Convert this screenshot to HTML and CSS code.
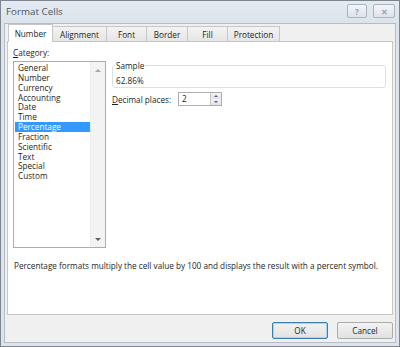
FILE: index.html
```html
<!DOCTYPE html>
<html lang="en">

<head>
    <meta charset="UTF-8">
    <title>Format Cells</title>
    <link rel="stylesheet" href="styles.css">
</head>

<body>
    <!-- Fenêtre de dialogue -->
    <div class="dialog">
        <div class="titlebar">
            <span class="title">Format Cells</span>
            <div class="title-buttons">
                <span class="tbtn help">?</span>
                <span class="tbtn close">&#x2715;</span>
            </div>
        </div>

        <div class="body">
            <!-- Onglets -->
            <div class="tabs">
                <div class="tab active">Number</div>
                <div class="tab">Alignment</div>
                <div class="tab">Font</div>
                <div class="tab">Border</div>
                <div class="tab">Fill</div>
                <div class="tab">Protection</div>
            </div>

            <div class="panel">
                <div class="columns">
                    <div class="left">
                        <div class="label"><u>C</u>ategory:</div>
                        <div class="listbox">
                            <ul class="items">
                                <li>General</li>
                                <li>Number</li>
                                <li>Currency</li>
                                <li>Accounting</li>
                                <li>Date</li>
                                <li>Time</li>
                                <li class="selected">Percentage</li>
                                <li>Fraction</li>
                                <li>Scientific</li>
                                <li>Text</li>
                                <li>Special</li>
                                <li>Custom</li>
                            </ul>
                            <div class="scrollbar">
                                <span class="arrow up"></span>
                                <span class="arrow down"></span>
                            </div>
                        </div>
                    </div>

                    <div class="right">
                        <fieldset class="sample">
                            <legend>Sample</legend>
                            <div class="sample-value">62.86%</div>
                        </fieldset>
                        <div class="decimals">
                            <span class="decimals-label"><u>D</u>ecimal places:</span>
                            <div class="spin">
                                <span class="spin-value">2</span>
                                <div class="spin-buttons">
                                    <span class="spin-btn"><span class="arrow up"></span></span>
                                    <span class="spin-btn"><span class="arrow down"></span></span>
                                </div>
                            </div>
                        </div>
                    </div>
                </div>

                <p class="description">Percentage formats multiply the cell value by 100 and displays the result with a percent symbol.</p>
            </div>

            <!-- Boutons -->
            <div class="footer">
                <button class="btn default">OK</button>
                <button class="btn">Cancel</button>
            </div>
        </div>
    </div>
</body>

</html>
```

FILE: styles.css
```css
/* Corps de la page */
body {
    margin: 0;
    font-family: "Open Sans", "Noto Sans", Arial, sans-serif;
    font-size: 8.2px;
    color: #1e1e1e;
    background-color: #fff;
}

/* Fenêtre */
.dialog {
    width: 400px;
    height: 347px;
    box-sizing: border-box;
    background-color: #dce3eb;
    border: 1px solid #7f858c;
    display: flex;
    flex-direction: column;
}

.titlebar {
    height: 22px;
    flex-shrink: 0;
    display: flex;
    justify-content: space-between;
    align-items: flex-start;
    padding: 0 4px 0 5px;
    background: linear-gradient(#e4eaf1, #dce3eb);
}

.title {
    font-size: 9.8px;
    line-height: 22px;
    color: #4a5664;
}

.title-buttons {
    display: flex;
    gap: 6px;
    margin-top: 3px;
}

.tbtn {
    height: 14px;
    box-sizing: border-box;
    border: 1px solid #aab4bf;
    border-radius: 2px;
    background: linear-gradient(#f3f6f9, #dee4eb);
    font-size: 8px;
    font-weight: bold;
    color: #97a2ae;
    display: flex;
    justify-content: center;
    align-items: center;
}

.tbtn.help {
    width: 20px;
}

.tbtn.close {
    width: 22px;
}

.body {
    flex: 1;
    margin: 0 3px 3px 3px;
    background-color: #f0f0f0;
    border: 1px solid #b6bcc3;
    padding: 0 2px;
    display: flex;
    flex-direction: column;
}

/* Onglets */
.tabs {
    display: flex;
    align-items: flex-end;
    height: 17px;
    padding-left: 1px;
    position: relative;
    z-index: 1;
}

.tab {
    height: 15px;
    box-sizing: border-box;
    border: 1px solid #c6c6c6;
    border-bottom: none;
    margin-left: -1px;
    background: linear-gradient(#f3f3f3, #e5e5e5);
    display: flex;
    align-items: center;
    justify-content: center;
}

.tab:nth-child(2) { width: 54px; }
.tab:nth-child(3) { width: 41px; }
.tab:nth-child(4) { width: 42px; }
.tab:nth-child(5) { width: 41px; }
.tab:nth-child(6) { width: 53px; }

.tab.active {
    width: 45px;
    height: 18px;
    margin-left: 0;
    margin-bottom: -1px;
    background: #fff;
    padding-bottom: 1px;
    position: relative;
    z-index: 2;
}

.tab.active + .tab {
    margin-left: 0;
    border-left: none;
}

.panel {
    height: 274px;
    flex-shrink: 0;
    box-sizing: border-box;
    background-color: #fff;
    border: 1px solid #c6c6c6;
    padding: 6px 6px 0 5px;
}

.columns {
    display: flex;
    gap: 6px;
}

.left {
    width: 93px;
}

.label {
    height: 10px;
    line-height: 10px;
    margin-bottom: 3px;
}

/* Liste des catégories */
.listbox {
    height: 187px;
    box-sizing: border-box;
    border: 1px solid #abadb3;
    display: flex;
}

.items {
    list-style: none;
    margin: 0;
    padding: 1px 0 0 1px;
    flex: 1;
}

.items li {
    height: 9.85px;
    line-height: 9.85px;
    padding-left: 3px;
}

.items li.selected {
    background-color: #3399ff;
    color: #fff;
}

.scrollbar {
    width: 14px;
    background-color: #f3f3f3;
    border-left: 1px solid #ededed;
    display: flex;
    flex-direction: column;
    justify-content: space-between;
    align-items: center;
    padding: 7px 0 6px 0;
}

.arrow {
    width: 0;
    height: 0;
    border-left: 3px solid transparent;
    border-right: 3px solid transparent;
}

.arrow.up {
    border-bottom: 3px solid #a6a6a6;
}

.arrow.down {
    border-top: 3px solid #606060;
}

/* Partie droite */
.right {
    flex: 1;
    padding-top: 13px;
}

.sample {
    margin: 0;
    padding: 6px 3px 1px 3px;
    border: 1px solid #dcdfe3;
    border-radius: 3px;
    min-width: 0;
}

.sample legend {
    padding: 0 1px;
    margin-left: -1px;
    line-height: 9px;
}

.sample-value {
    line-height: 10px;
}

.decimals {
    display: flex;
    align-items: center;
    margin-top: 4px;
}

.decimals-label {
    width: 66px;
}

.spin {
    width: 44px;
    height: 14px;
    box-sizing: border-box;
    border: 1px solid #abadb3;
    display: flex;
    justify-content: space-between;
}

.spin-value {
    padding-left: 3px;
    line-height: 12px;
}

.spin-buttons {
    width: 11px;
    display: flex;
    flex-direction: column;
}

.spin-btn {
    flex: 1;
    background: linear-gradient(#f3f3f3, #e2e2e2);
    border-left: 1px solid #c8c8c8;
    display: flex;
    justify-content: center;
    align-items: center;
}

.spin-btn .arrow {
    border-left-width: 2px;
    border-right-width: 2px;
}

.spin-btn .arrow.up {
    border-bottom: 2px solid #4d6185;
}

.spin-btn .arrow.down {
    border-top: 2px solid #4d6185;
}

.description {
    margin: 13px 0 0 1px;
    line-height: 10px;
    white-space: nowrap;
}

/* Boutons du bas */
.footer {
    display: flex;
    justify-content: flex-end;
    gap: 9px;
    padding: 7px 0 0 0;
}

.btn {
    width: 56px;
    height: 17px;
    font-family: inherit;
    font-size: 8.2px;
    color: #1e1e1e;
    border: 1px solid #acacac;
    border-radius: 2px;
    background: linear-gradient(#f2f2f2, #e2e2e2);
    padding: 0;
}

.btn.default {
    border-color: #3c7fb1;
    box-shadow: inset 0 0 0 1px #a8d3f0;
}
```
